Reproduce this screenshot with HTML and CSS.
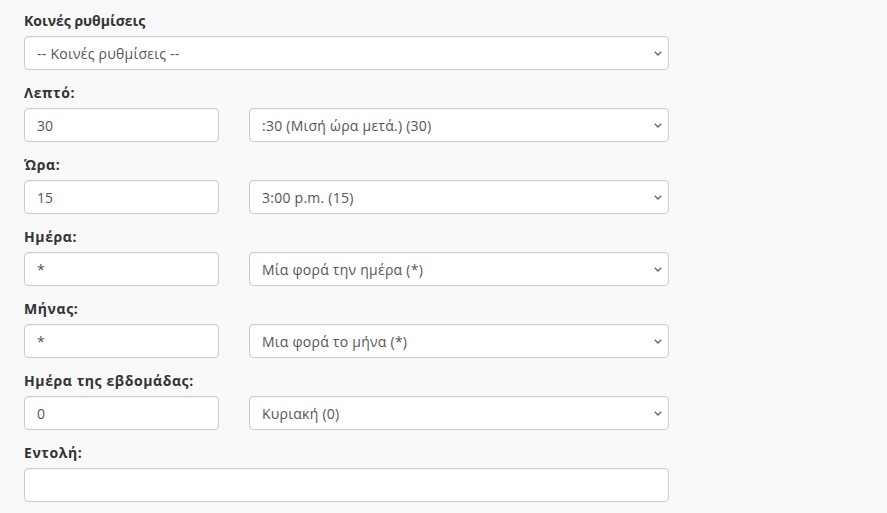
FILE: index.html
```html
<!DOCTYPE html>
<html lang="el">
<head>
  <meta charset="UTF-8">
  <title>Cron</title>
  <link rel="stylesheet" href="styles.css">
</head>
<body>
  <form class="cron-form">
    <div class="form-group">
      <label for="preset" class="title">Κοινές ρυθμίσεις</label>
      <div class="select-wrap">
        <select id="preset" class="form-control">
          <option>-- Κοινές ρυθμίσεις --</option>
        </select>
        <svg class="caret" width="8" height="5" viewBox="0 0 8 5"><path d="M0.7 0.7 L4 4 L7.3 0.7" fill="none" stroke="#666" stroke-width="1.3"/></svg>
      </div>
    </div>
    <div class="form-group">
      <label for="minute">Λεπτό:</label>
      <div class="row">
        <input type="text" id="minute" class="form-control" value="30">
        <div class="select-wrap">
          <select class="form-control">
            <option>:30 (Μισή ώρα μετά.) (30)</option>
          </select>
          <svg class="caret" width="8" height="5" viewBox="0 0 8 5"><path d="M0.7 0.7 L4 4 L7.3 0.7" fill="none" stroke="#666" stroke-width="1.3"/></svg>
        </div>
      </div>
    </div>
    <div class="form-group">
      <label for="hour">Ώρα:</label>
      <div class="row">
        <input type="text" id="hour" class="form-control" value="15">
        <div class="select-wrap">
          <select class="form-control">
            <option>3:00 p.m. (15)</option>
          </select>
          <svg class="caret" width="8" height="5" viewBox="0 0 8 5"><path d="M0.7 0.7 L4 4 L7.3 0.7" fill="none" stroke="#666" stroke-width="1.3"/></svg>
        </div>
      </div>
    </div>
    <div class="form-group">
      <label for="day">Ημέρα:</label>
      <div class="row">
        <input type="text" id="day" class="form-control" value="*">
        <div class="select-wrap">
          <select class="form-control">
            <option>Μία φορά την ημέρα (*)</option>
          </select>
          <svg class="caret" width="8" height="5" viewBox="0 0 8 5"><path d="M0.7 0.7 L4 4 L7.3 0.7" fill="none" stroke="#666" stroke-width="1.3"/></svg>
        </div>
      </div>
    </div>
    <div class="form-group">
      <label for="month">Μήνας:</label>
      <div class="row">
        <input type="text" id="month" class="form-control" value="*">
        <div class="select-wrap">
          <select class="form-control">
            <option>Μια φορά το μήνα (*)</option>
          </select>
          <svg class="caret" width="8" height="5" viewBox="0 0 8 5"><path d="M0.7 0.7 L4 4 L7.3 0.7" fill="none" stroke="#666" stroke-width="1.3"/></svg>
        </div>
      </div>
    </div>
    <div class="form-group">
      <label for="weekday">Ημέρα της εβδομάδας:</label>
      <div class="row">
        <input type="text" id="weekday" class="form-control" value="0">
        <div class="select-wrap">
          <select class="form-control">
            <option>Κυριακή (0)</option>
          </select>
          <svg class="caret" width="8" height="5" viewBox="0 0 8 5"><path d="M0.7 0.7 L4 4 L7.3 0.7" fill="none" stroke="#666" stroke-width="1.3"/></svg>
        </div>
      </div>
    </div>
    <div class="form-group">
      <label for="command">Εντολή:</label>
      <input type="text" id="command" class="form-control">
    </div>
  </form>
</body>
</html>
```

FILE: styles.css
```css
body {
  font-family: "Open Sans", "Noto Sans", sans-serif;
  font-size: 14px;
  line-height: 20px;
  color: #333;
  background: #f9f9f9;
  margin: 0;
  padding: 11px 24px 0;
}
.cron-form {
  width: 645px;
}
.form-group {
  margin-bottom: 13px;
}
label {
  display: block;
  font-weight: bold;
  margin-bottom: 5px;
  letter-spacing: 0.6px;
}
label.title {
  letter-spacing: 0;
}
.row {
  display: grid;
  grid-template-columns: 195px 1fr;
  gap: 30px;
}
.form-control {
  display: block;
  width: 100%;
  box-sizing: border-box;
  height: 34px;
  padding: 6px 12px;
  font-family: inherit;
  font-size: 14px;
  color: #555;
  background: #fff;
  border: 1px solid #ccc;
  border-radius: 4px;
  box-shadow: inset 0 1px 1px rgba(0, 0, 0, 0.05);
}
.select-wrap {
  position: relative;
}
select.form-control {
  appearance: none;
  -webkit-appearance: none;
  padding: 6px 12px;
  letter-spacing: 0.25px;
}
.caret {
  position: absolute;
  right: 7px;
  top: 15px;
  pointer-events: none;
}
```
